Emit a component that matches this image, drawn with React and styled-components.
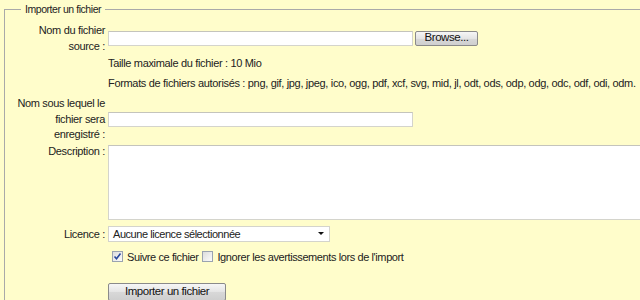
import React from "react";
import styled, { createGlobalStyle } from "styled-components";

const Global = createGlobalStyle`
  html, body { margin: 0; padding: 0; overflow: hidden; }
  body {
    background: #fffdcb;
    font-family: "Liberation Sans", Arial, sans-serif;
    font-size: 11px;
    letter-spacing: -0.33px;
    color: #222;
    width: 640px;
    height: 300px;
  }
`;

const Frame = styled.section`
  position: relative;
  margin: 9px 0 0 4px;
  width: 760px;
  border-top: 1px solid #a9a9a9;
  border-left: 1px solid #a9a9a9;
`;

const Legend = styled.div`
  position: absolute;
  top: -8px;
  left: 16px;
  padding: 0 4px;
  line-height: 14px;
  font-size: 10.5px;
  letter-spacing: -0.45px;
  background: #fffdcb;
`;

const Form = styled.div`
  display: flex;
  flex-direction: column;
  padding-top: 12px;
`;

const Row = styled.div`
  display: flex;
  align-items: ${(p) => (p.$top ? "flex-start" : "center")};
  gap: 3px;
  margin-top: ${(p) => p.$gap || 0}px;
`;

const Label = styled.div`
  width: 100px;
  flex: none;
  text-align: right;
  line-height: ${(p) => p.$lh || 16}px;
`;

const Field = styled.div`
  display: flex;
  align-items: center;
  gap: 2px;
  line-height: 16px;
  white-space: nowrap;
`;

const TextInput = styled.div`
  box-sizing: border-box;
  width: 305px;
  height: 15px;
  background: #fff;
  border: 1px solid #d4d4cc;
  border-top-color: #c4c4bc;
`;

const TextArea = styled.div`
  box-sizing: border-box;
  width: 560px;
  height: 75px;
  background: #fff;
  border: 1px solid #d4d4cc;
  border-top-color: #c4c4bc;
`;

const Button = styled.div`
  box-sizing: border-box;
  width: ${(p) => p.$w}px;
  height: ${(p) => p.$h || 15}px;
  border: 1px solid #8a8a8a;
  border-radius: 2px;
  background: linear-gradient(#f6f6f6, #e4e4e4 50%, #d8d8d8 51%, #cfcfcf);
  display: flex;
  align-items: center;
  justify-content: center;
  font-size: 11.5px;
  letter-spacing: -0.45px;
  color: #111;
  line-height: 1;
`;

const Select = styled.div`
  box-sizing: border-box;
  width: 222px;
  height: 16px;
  background: #fff;
  border: 1px solid #d4d4cc;
  display: flex;
  align-items: center;
  justify-content: space-between;
  padding: 0 4px 0 4px;
  font-size: 11px;
  letter-spacing: -0.45px;
`;

const Arrow = styled.span`
  width: 0;
  height: 0;
  border-left: 3px solid transparent;
  border-right: 3px solid transparent;
  border-top: 3px solid #111;
  margin-right: 1px;
`;

const CheckRow = styled.div`
  display: flex;
  align-items: center;
  padding-left: 4px;
  letter-spacing: -0.4px;
`;

const Box = styled.span`
  box-sizing: border-box;
  width: 11px;
  height: 11px;
  border: 1px solid #9aa3b0;
  background: linear-gradient(135deg, #dcdcdc, #fbfbfb);
  display: inline-flex;
  align-items: center;
  justify-content: center;
  margin-right: 4px;
`;

const CheckText = styled.span`
  margin-right: 4px;
`;

function Check({ checked, children }) {
  return (
    <>
      <Box>
        {checked && (
          <svg width="9" height="9" viewBox="0 0 9 9">
            <path d="M1.5 4.5 L3.5 6.8 L7.5 1.5" fill="none" stroke="#27479c" strokeWidth="1.6" />
          </svg>
        )}
      </Box>
      <CheckText>{children}</CheckText>
    </>
  );
}

export default function App() {
  return (
    <>
      <Global />
      <Frame>
        <Legend>Importer un fichier</Legend>
        <Form>
          <Row>
            <Label>Nom du fichier<br />source :</Label>
            <Field>
              <TextInput />
              <Button $w={63}>Browse...</Button>
            </Field>
          </Row>
          <Row $gap={1}>
            <Label />
            <Field>Taille maximale du fichier : 10 Mio</Field>
          </Row>
          <Row $gap={4}>
            <Label />
            <Field>Formats de fichiers autorisés : png, gif, jpg, jpeg, ico, ogg, pdf, xcf, svg, mid, jl, odt, ods, odp, odg, odc, odf, odi, odm.</Field>
          </Row>
          <Row $gap={5}>
            <Label $lh={15.5}>Nom sous lequel le<br />fichier sera<br />enregistré :</Label>
            <Field>
              <TextInput />
            </Field>
          </Row>
          <Row $gap={2} $top>
            <Label $lh={12}>Description :</Label>
            <Field>
              <TextArea />
            </Field>
          </Row>
          <Row $gap={6}>
            <Label>Licence :</Label>
            <Field>
              <Select>
                <span>Aucune licence sélectionnée</span>
                <Arrow />
              </Select>
            </Field>
          </Row>
          <Row $gap={7}>
            <Label />
            <Field>
              <CheckRow>
                <Check checked>Suivre ce fichier</Check>
                <Check>Ignorer les avertissements lors de l'import</Check>
              </CheckRow>
            </Field>
          </Row>
          <Row $gap={18}>
            <Label />
            <Field>
              <Button $w={118} $h={18}>Importer un fichier</Button>
            </Field>
          </Row>
        </Form>
      </Frame>
    </>
  );
}
